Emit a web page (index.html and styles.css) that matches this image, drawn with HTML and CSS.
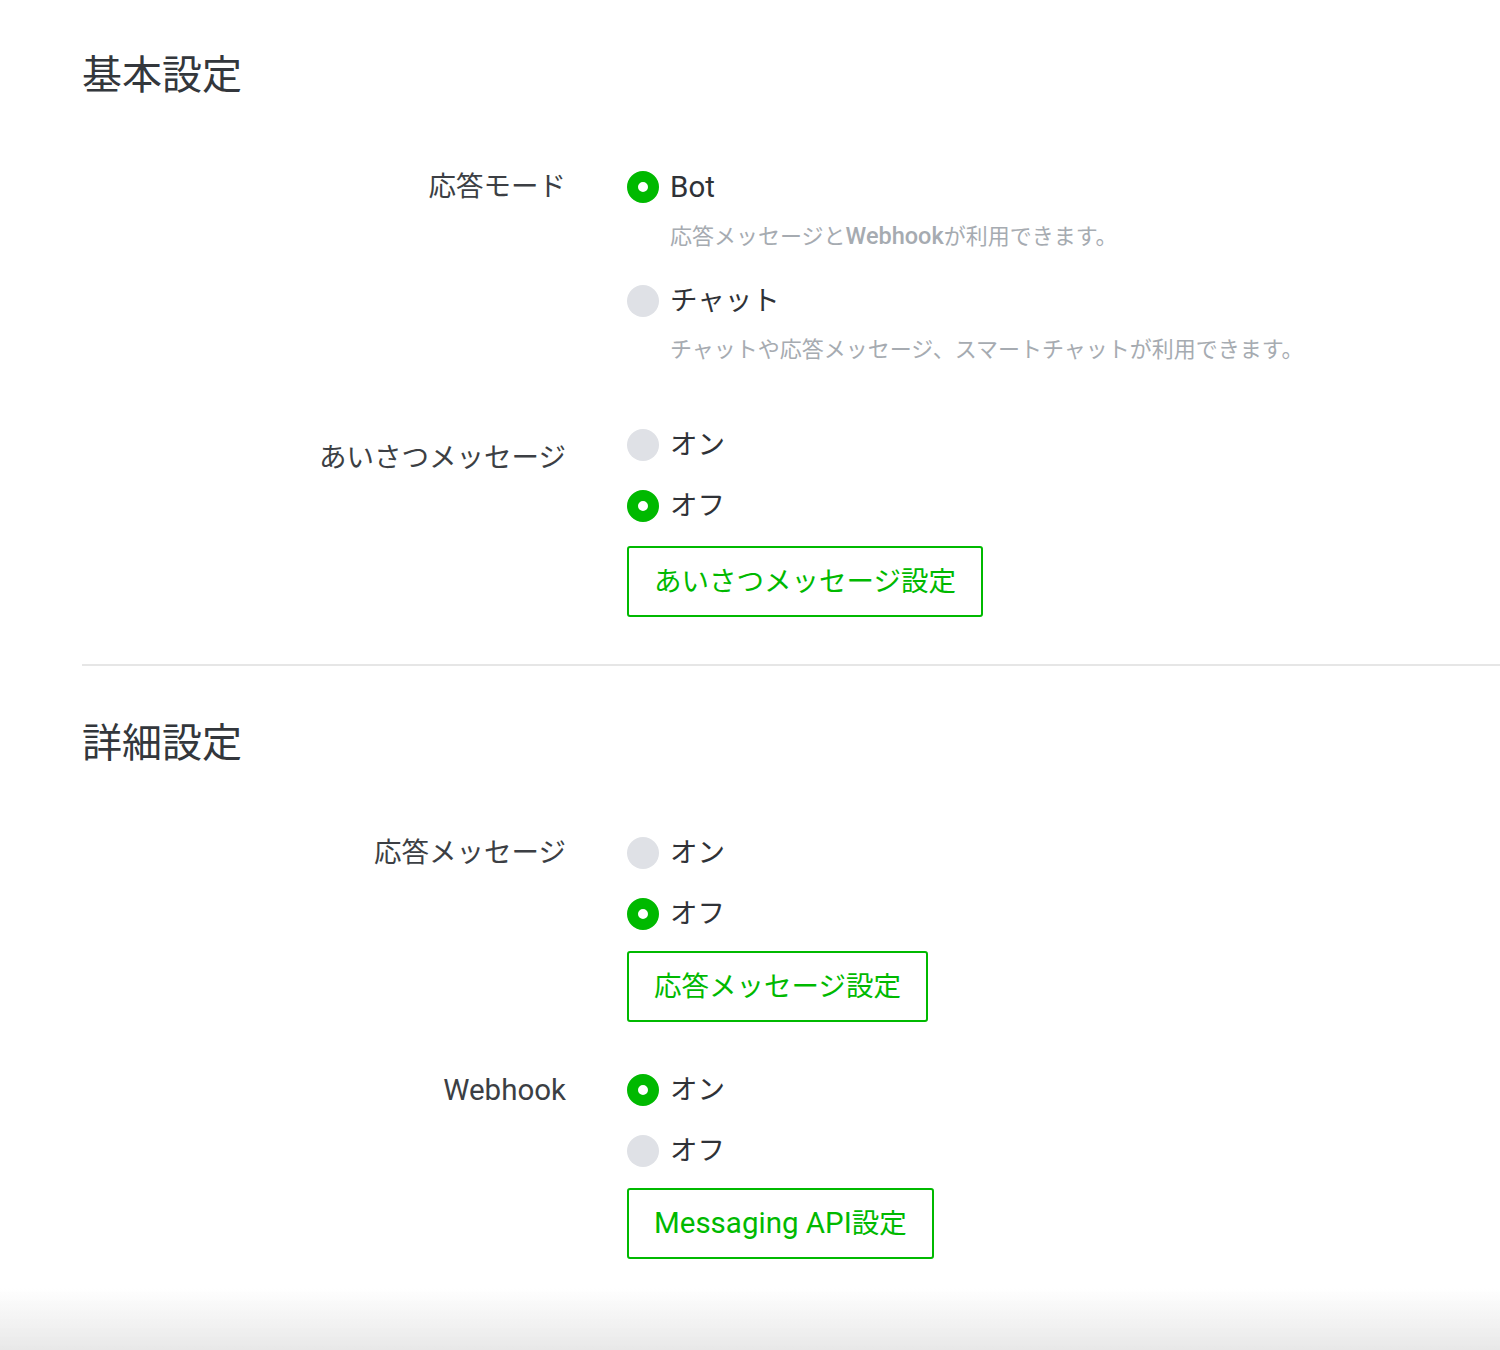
FILE: index.html
```html
<!DOCTYPE html>
<html lang="ja">
<head>
<meta charset="utf-8">
<title>設定</title>
<link rel="stylesheet" href="styles.css">
</head>
<body>
<main class="page">
  <section class="section">
    <h2 class="section-title">基本設定</h2>
    <div class="group">
      <div class="group-label">応答モード</div>
      <div class="options">
        <div class="option">
          <div class="option-line"><span class="radio checked"></span><span class="option-text"><span class="latin-lg">Bot</span></span></div>
          <div class="option-desc">応答メッセージと<span class="latin">Webhook</span>が利用できます。</div>
        </div>
        <div class="option">
          <div class="option-line"><span class="radio"></span><span class="option-text">チャット</span></div>
          <div class="option-desc">チャットや応答メッセージ、スマートチャットが利用できます。</div>
        </div>
      </div>
    </div>
    <div class="group">
      <div class="group-label group-label-low">あいさつメッセージ</div>
      <div class="options">
        <div class="option-line"><span class="radio"></span><span class="option-text">オン</span></div>
        <div class="option-line"><span class="radio checked"></span><span class="option-text">オフ</span></div>
        <div class="button-row"><button class="btn">あいさつメッセージ設定</button></div>
      </div>
    </div>
  </section>
  <hr class="divider">
  <section class="section">
    <h2 class="section-title section-title-compact">詳細設定</h2>
    <div class="group">
      <div class="group-label">応答メッセージ</div>
      <div class="options">
        <div class="option-line"><span class="radio"></span><span class="option-text">オン</span></div>
        <div class="option-line"><span class="radio checked"></span><span class="option-text">オフ</span></div>
        <div class="button-row button-row-tight"><button class="btn">応答メッセージ設定</button></div>
      </div>
    </div>
    <div class="group">
      <div class="group-label"><span class="latin-lg">Webhook</span></div>
      <div class="options">
        <div class="option-line"><span class="radio checked"></span><span class="option-text">オン</span></div>
        <div class="option-line"><span class="radio"></span><span class="option-text">オフ</span></div>
        <div class="button-row button-row-tight"><button class="btn"><span class="latin-btn">Messaging API</span>設定</button></div>
      </div>
    </div>
  </section>
</main>
<div class="bottom-fade"></div>
</body>
</html>
```
FILE: styles.css
```css
html, body {
  margin: 0;
  padding: 0;
  background: #ffffff;
}
body {
  font-family: "Roboto", "Noto Sans CJK JP", sans-serif;
  color: #383b40;
}
.page {
  padding: 52px 0 80px 82px;
}
.section {
  display: flex;
  flex-direction: column;
  gap: 48px;
}
.section-title {
  margin: 0 0 19px 0;
  font-size: 40px;
  line-height: 48px;
  font-weight: 400;
  color: #33373c;
}
.section-title-compact {
  margin-bottom: 17px;
}
.group {
  display: flex;
  gap: 61px;
}
.group-label {
  width: 484px;
  flex: none;
  text-align: right;
  font-size: 27.5px;
  line-height: 40px;
  color: #3c3f44;
}
.group-label-low {
  padding-top: 13px;
}
.options {
  display: flex;
  flex-direction: column;
  gap: 21px;
}
.option {
  display: flex;
  flex-direction: column;
}
.option-line {
  display: flex;
  align-items: center;
  gap: 11px;
  height: 40px;
}
.radio {
  width: 32px;
  height: 32px;
  border-radius: 50%;
  background: #dfe1e6;
  box-sizing: border-box;
  flex: none;
}
.radio.checked {
  background: #ffffff;
  border: 11px solid #00b900;
}
.option-text {
  font-size: 27.5px;
  line-height: 40px;
  color: #2f3237;
}
.latin-lg {
  font-size: 29.5px;
}
.option-desc {
  margin: 14px 0 8px 43px;
  font-size: 22px;
  line-height: 30px;
  color: #a6abb1;
}
.option:last-child .option-desc {
  margin-bottom: 12px;
}
.latin {
  font-size: 23.5px;
  font-weight: 500;
}
.button-row {
  display: flex;
  margin-top: -1px;
}
.button-row-tight {
  margin-top: -4px;
}
.btn {
  height: 71px;
  padding: 0 25px;
  border: 2px solid #00b900;
  border-radius: 3px;
  background: #ffffff;
  color: #00b900;
  font-family: "Roboto", "Noto Sans CJK JP", sans-serif;
  font-size: 27.5px;
  line-height: 66px;
}
.latin-btn {
  font-size: 29.5px;
}
.divider {
  margin: 47px 0 54px 0;
  border: 0;
  height: 2px;
  background: #e6e6e6;
}
.bottom-fade {
  position: fixed;
  left: 0;
  right: 0;
  bottom: 0;
  height: 62px;
  background: linear-gradient(to bottom, rgba(232,232,232,0), #e8e8e8);
  pointer-events: none;
}
```
